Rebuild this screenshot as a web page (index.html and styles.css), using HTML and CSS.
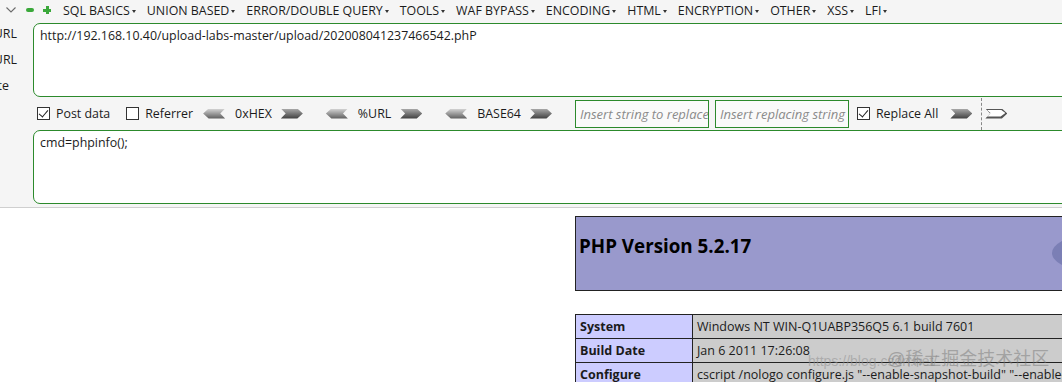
FILE: index.html
```html
<!DOCTYPE html>
<html lang="zh-CN">
<head>
    <meta charset="UTF-8">
    <title>HackBar - phpinfo</title>
    <link rel="stylesheet" href="styles.css">
</head>
<body>
    <div class="hackbar">
        <div class="menubar">
            <svg class="chevron" width="10" height="6" viewBox="0 0 10 6"><polyline points="0.5,0.5 5,5 9.5,0.5" fill="none" stroke="#6b6b6b" stroke-width="1.1"/></svg>
            <span class="btn-minus"></span>
            <span class="btn-plus"></span>
            <ul class="menu">
                <li>SQL BASICS</li>
                <li>UNION BASED</li>
                <li>ERROR/DOUBLE QUERY</li>
                <li>TOOLS</li>
                <li>WAF BYPASS</li>
                <li>ENCODING</li>
                <li>HTML</li>
                <li>ENCRYPTION</li>
                <li>OTHER</li>
                <li>XSS</li>
                <li>LFI</li>
            </ul>
        </div>
        <div class="panel">
            <div class="side">
                <span>Load URL</span>
                <span>Split URL</span>
                <span class="exec">Execute</span>
            </div>
            <div class="fields">
                <div class="box">http://192.168.10.40/upload-labs-master/upload/202008041237466542.phP</div>
                <div class="options">
                    <label class="check post"><span class="tick on"></span>Post data</label>
                    <label class="check ref"><span class="tick"></span>Referrer</label>
                    <span class="arrow left"></span><span class="enc">0xHEX</span><span class="arrow right"></span>
                    <span class="arrow left"></span><span class="enc">%URL</span><span class="arrow right"></span>
                    <span class="arrow left"></span><span class="enc">BASE64</span><span class="arrow right"></span>
                    <span class="field">Insert string to replace</span>
                    <span class="field">Insert replacing string</span>
                    <label class="check all"><span class="tick on"></span>Replace All</label>
                    <span class="arrow right go"></span>
                    <span class="sep"></span>
                    <span class="arrow right light"></span>
                </div>
                <div class="box">cmd=phpinfo();</div>
            </div>
        </div>
    </div>

    <div class="page">
        <div class="phpinfo">
            <div class="php-head">
                <h1>PHP Version 5.2.17</h1>
                <span class="logo"></span>
            </div>
            <table>
                <tr><th>System</th><td>Windows NT WIN-Q1UABP356Q5 6.1 build 7601</td></tr>
                <tr><th>Build Date</th><td>Jan 6 2011 17:26:08</td></tr>
                <tr><th>Configure</th><td>cscript /nologo configure.js "--enable-snapshot-build" "--enable-debug-pack"</td></tr>
            </table>
        </div>
        <div class="watermark"><span class="wm-url">https://blog.csdn.net/</span><span class="wm-cn">@稀土掘金技术社区</span></div>
    </div>
</body>
</html>
```

FILE: styles.css
```css
*{ box-sizing: border-box;}
html, body{
    margin:0;
    overflow:hidden;
}
body{
    width:1062px;
    height:382px;
    background:#fff;
    font-family:"Open Sans", "Noto Sans CJK SC", sans-serif;
    font-size:12.4px;
    color:#1b1b1b;
}

/* hackbar */
.hackbar{
    background:#f5f5f5;
    border-bottom:1px solid #cfcfcf;
    height:208px;
}
.menubar{
    height:20px;
    display:flex;
    align-items:center;
}
.chevron{
    margin:0 10px 0 6px;
}
.btn-minus{
    width:8px;
    height:4px;
    border-radius:2px;
    background:#3aa83a;
    margin-right:9px;
}
.btn-plus{
    width:8px;
    height:8px;
    margin-right:12px;
    background:
        linear-gradient(#3aa83a,#3aa83a) center/8px 3px no-repeat,
        linear-gradient(#3aa83a,#3aa83a) center/3px 8px no-repeat;
}
.menu{
    display:flex;
    gap:11px;
    list-style:none;
    margin:0;
    padding:0;
    white-space:nowrap;
}
.menu li::after{
    content:"";
    display:inline-block;
    margin-left:2px;
    vertical-align:middle;
    border-left:2.5px solid transparent;
    border-right:2.5px solid transparent;
    border-top:3px solid #333;
}

.panel{
    display:flex;
    margin-top:3px;
}
.side{
    width:33px;
    flex:none;
    display:flex;
    flex-direction:column;
    align-items:flex-end;
    gap:7px;
    padding:1px 16px 0 0;
    overflow:hidden;
    white-space:nowrap;
}
.side span{
    line-height:19px;
}
.side .exec{
    margin-right:8px;
}
.fields{
    width:1040px;
    flex:none;
}
.box{
    height:74px;
    background:#fff;
    border:1px solid #2c8a2c;
    border-radius:7px;
    padding:3px 6px;
    line-height:18px;
}
.options{
    height:33px;
    display:flex;
    align-items:center;
    padding-left:4px;
    white-space:nowrap;
}
.check{
    display:flex;
    align-items:center;
}
.check.post{ margin-right:16px;}
.check.ref{ margin-right:10px;}
.check.all{ margin-left:2px;}
.tick{
    width:13px;
    height:13px;
    border:1px solid #333;
    background:#fff;
    margin-right:6px;
    position:relative;
}
.tick.on::after{
    content:"";
    position:absolute;
    left:3px;
    top:0;
    width:4px;
    height:8px;
    border-right:1px solid #222;
    border-bottom:1px solid #222;
    transform:rotate(40deg);
}
.arrow{
    width:22px;
    height:10px;
    flex:none;
}
.arrow.left{
    background:linear-gradient(#d2d2d2,#5a5a5a);
    clip-path:polygon(0 50%,25% 0,100% 0,78% 50%,100% 100%,25% 100%);
    margin-right:10px;
}
.arrow.right{
    background:linear-gradient(#a8a8a8,#3c3c3c);
    clip-path:polygon(0 0,75% 0,100% 50%,75% 100%,0 100%,22% 50%);
    margin-left:9px;
    margin-right:23px;
}
.arrow.go{
    margin-left:12px;
    margin-right:9px;
}
.arrow.light{
    margin:0 0 0 3px;
    background:#555;
    position:relative;
}
.arrow.light::after{
    content:"";
    position:absolute;
    inset:1px 2px 2px 1px;
    background:#fff;
    clip-path:polygon(0 0,75% 0,100% 50%,75% 100%,0 100%,22% 50%);
}
.sep{
    height:32px;
    border-left:1px dashed #888;
}
.field{
    width:134px;
    height:28px;
    flex:none;
    border:1px solid #2c8a2c;
    background:#fafafa;
    color:#8a8a8a;
    font-style:italic;
    font-size:13px;
    padding:0 4px;
    line-height:26px;
    overflow:hidden;
    margin-right:6px;
}

/* phpinfo */
.page{
    position:relative;
    padding-top:8px;
}
.phpinfo{
    margin-left:575px;
    width:600px;
    font-family:"Open Sans", "DejaVu Sans", sans-serif;
}
.php-head{
    height:75px;
    background:#9999cc;
    border:1px solid #222;
    padding:16px 0 0 3px;
    position:relative;
    overflow:hidden;
}
.php-head h1{
    margin:0;
    font-size:18.8px;
    line-height:26px;
    font-weight:bold;
    color:#000;
}
.logo{
    position:absolute;
    left:476px;
    top:20px;
    width:60px;
    height:32px;
    border-radius:50%;
    background:#7b7fb5;
}
table{
    margin-top:23px;
    border-collapse:collapse;
    width:700px;
    font-size:12.5px;
}
th, td{
    border:1px solid #222;
    height:24px;
    padding:0 4px;
    text-align:left;
    white-space:nowrap;
}
th{
    width:117px;
    background:#ccccff;
    font-weight:bold;
}
td{
    background:#cccccc;
}
.watermark{
    position:absolute;
    left:808px;
    top:145px;
    white-space:nowrap;
    color:rgba(150,150,150,0.6);
    font-family:"Liberation Sans", "Noto Sans CJK SC", sans-serif;
    font-size:14px;
}
.wm-cn{
    position:absolute;
    left:79px;
    top:-9px;
    font-size:18px;
    color:rgba(120,120,120,0.5);
}
```
